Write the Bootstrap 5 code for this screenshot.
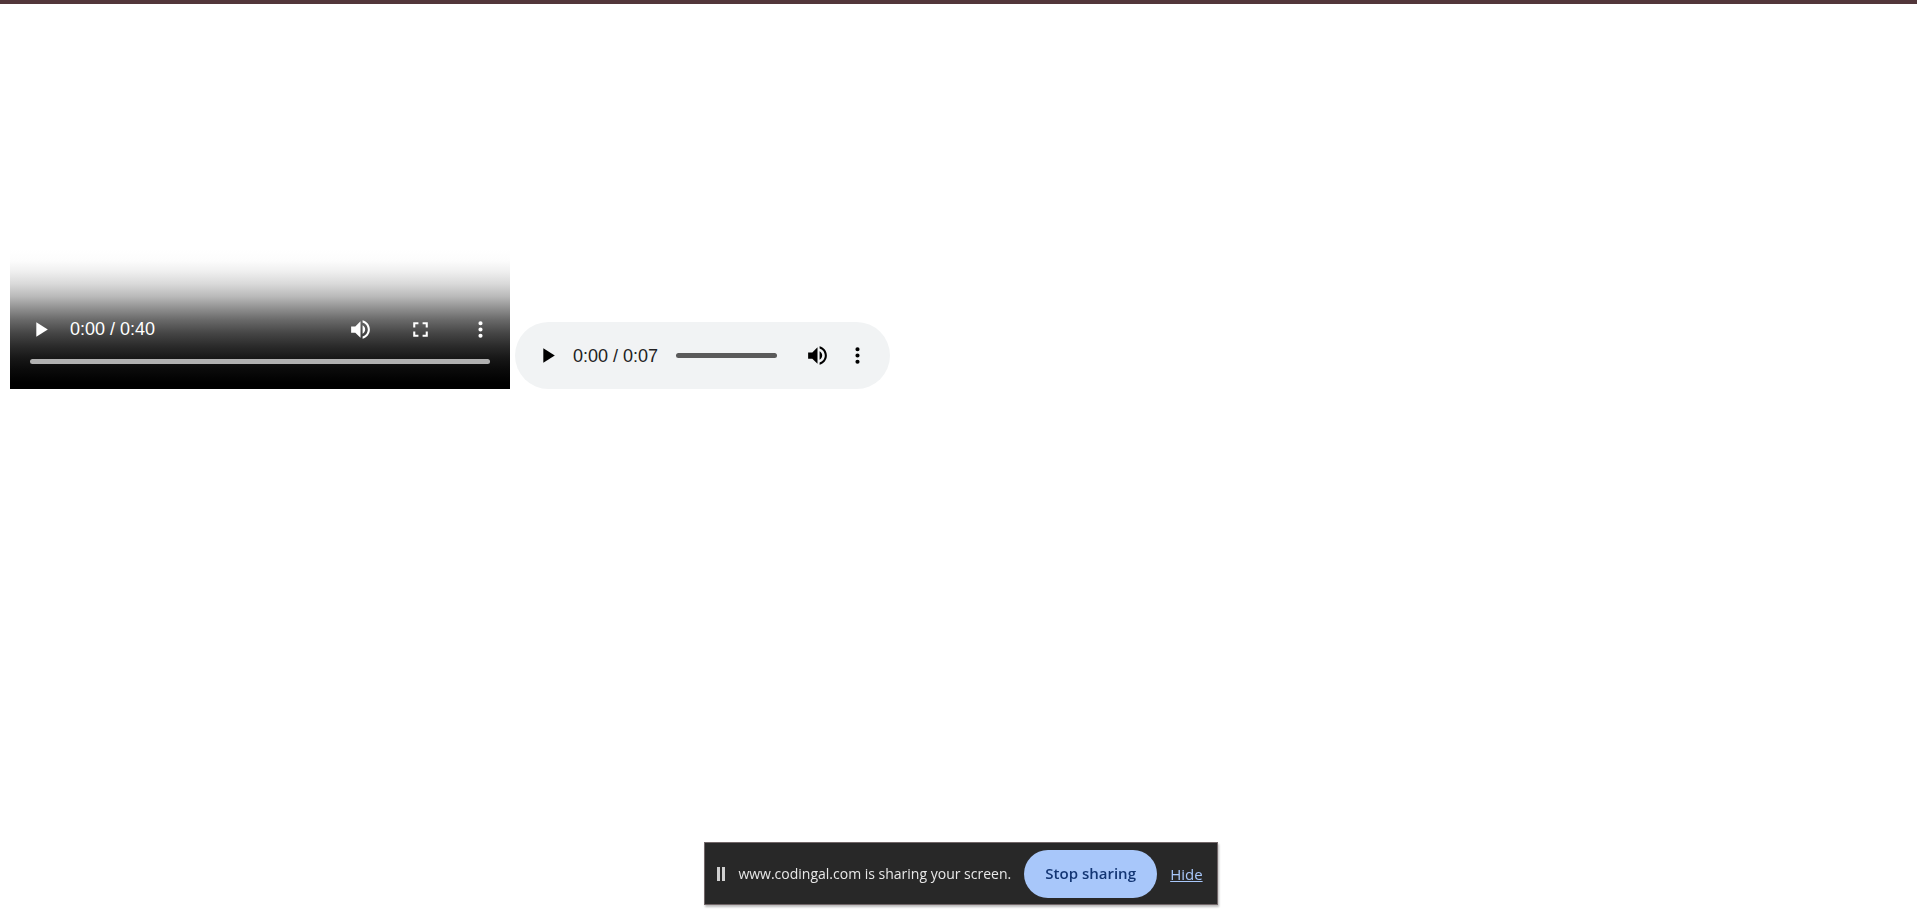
<!DOCTYPE html>
<html lang="en">
<head>
<meta charset="utf-8">
<meta name="viewport" content="width=device-width, initial-scale=1">
<title>Media players</title>
<link href="https://cdn.jsdelivr.net/npm/bootstrap@5.3.0/dist/css/bootstrap.min.css" rel="stylesheet">
<style>
  body { background: #fff; border-top: 4px solid #52363a; font-family: "Liberation Sans", Arial, sans-serif; }
  .stage { padding: 10px; gap: 5px; }
  .icon-btn { border: 0; border-radius: 0; padding: 0; color: inherit; background: none; display: flex; align-items: center; justify-content: center; flex: none; }
  .icon-btn svg { width: 25px; height: 25px; fill: currentColor; }
  .time { font-size: 18px; line-height: 24px; white-space: nowrap; }

  .video-player { width: 500px; max-width: 100%; aspect-ratio: 4 / 3; color: #fff; }
  .video-panel {
    height: 140px; padding-bottom: 25px;
    background: linear-gradient(#fff 0, #fcfcfc 12px, #f0f0f0 22px, #d9d9d9 35px, #b8b8b8 48px, #8e8e8e 60px, #696969 71px, #464646 84px, #2b2b2b 97px, #171717 109px, #0b0b0b 120px, #000 134px);
  }
  .video-panel .icon-btn { width: 60px; height: 60px; }

  .track { appearance: none; -webkit-appearance: none; display: block; height: 5px; margin: 0; border-radius: 3px; min-width: 0; }
  .track::-webkit-slider-thumb { -webkit-appearance: none; width: 0; height: 0; }
  .track-light { background: #b1b1b1; margin: 0 20px; }
  .track-dark { background: #5a5a5a; margin: 0 20px 0 18px; }

  .audio-player { width: 375px; max-width: 100%; height: 67px; padding: 0 13px 0 12px; border-radius: 34px; background: #f1f3f4; color: #000; }
  .audio-player .icon-btn { width: 40px; height: 40px; }
  .audio-player .time { color: #222; margin-left: 6px; }

  .share-wrap { padding: 0 0 7px 5px; pointer-events: none; }
  .share-bar { pointer-events: auto; height: 63px; padding: 0 14px 0 12px; gap: 13px; border: 1px solid #716668; background: #282828; color: #e8e8e8; font: 14px/20px "Open Sans", "Noto Sans", sans-serif; box-shadow: 1px 2px 2px #0004; white-space: nowrap; }
  .pause-mark { width: 8px; height: 14px; border: solid #d0d0d0; border-width: 0 3px; }
  .stop-btn { width: 133px; height: 48px; padding: 0; border: 0; background: #a8c7fa; color: #133674; font-size: 15px; font-weight: 600; }
  .stop-btn:hover { background: #bcd4fb; color: #133674; }
  .hide-link { color: #a8c7fa; font-size: 15px; }
</style>
</head>
<body>
<main class="stage d-flex flex-wrap align-items-end">
  <section class="video-player d-flex flex-column justify-content-end" aria-label="Video player">
    <div class="video-panel d-flex flex-column justify-content-end">
      <div class="d-flex align-items-center">
        <button type="button" class="icon-btn" aria-label="Play"><svg viewBox="0 0 24 24"><path d="M8 5v14l11-7z"/></svg></button>
        <span class="time me-auto">0:00 / 0:40</span>
        <button type="button" class="icon-btn" aria-label="Mute"><svg viewBox="0 0 24 24"><path d="M3 9v6h4l5 5V4L7 9H3zm13.500 3c0-1.770-1.020-3.290-2.500-4.030v8.050c1.480-.730 2.500-2.250 2.500-4.020zM14 3.230v2.060c2.890.860 5 3.540 5 6.710s-2.110 5.850-5 6.710v2.060c4.010-.910 7-4.490 7-8.770s-2.990-7.860-7-8.770z"/></svg></button>
        <button type="button" class="icon-btn" aria-label="Full screen"><svg viewBox="0 0 24 24"><path d="M7 14H5v5h5v-2H7v-3zm-2-4h2V7h3V5H5v5zm12 7h-3v2h5v-5h-2v3zM14 5v2h3v3h2V5h-5z"/></svg></button>
        <button type="button" class="icon-btn" aria-label="More options"><svg viewBox="0 0 24 24"><path d="M12 8a2 2 0 1 0 0-4 2 2 0 0 0 0 4zm0 2a2 2 0 1 0 0 4 2 2 0 0 0 0-4zm0 6a2 2 0 1 0 0 4 2 2 0 0 0 0-4z"/></svg></button>
      </div>
      <input type="range" class="track track-light" min="0" max="40" value="0" aria-label="Video position">
    </div>
  </section>

  <section class="audio-player d-flex align-items-center" aria-label="Audio player">
    <button type="button" class="icon-btn" aria-label="Play"><svg viewBox="0 0 24 24"><path d="M8 5v14l11-7z"/></svg></button>
    <span class="time">0:00 / 0:07</span>
    <input type="range" class="track track-dark flex-fill" min="0" max="7" value="0" aria-label="Audio position">
    <button type="button" class="icon-btn" aria-label="Mute"><svg viewBox="0 0 24 24"><path d="M3 9v6h4l5 5V4L7 9H3zm13.500 3c0-1.770-1.020-3.290-2.500-4.030v8.050c1.480-.730 2.500-2.250 2.500-4.020zM14 3.230v2.060c2.890.860 5 3.540 5 6.710s-2.110 5.850-5 6.710v2.060c4.010-.910 7-4.490 7-8.770s-2.990-7.860-7-8.770z"/></svg></button>
    <button type="button" class="icon-btn" aria-label="More options"><svg viewBox="0 0 24 24"><path d="M12 8a2 2 0 1 0 0-4 2 2 0 0 0 0 4zm0 2a2 2 0 1 0 0 4 2 2 0 0 0 0-4zm0 6a2 2 0 1 0 0 4 2 2 0 0 0 0-4z"/></svg></button>
  </section>
</main>

<aside class="share-wrap fixed-bottom d-flex justify-content-center">
  <div class="share-bar d-flex align-items-center">
    <span class="pause-mark"></span>
    <span>www.codingal.com is sharing your screen.</span>
    <button type="button" class="btn stop-btn rounded-pill">Stop sharing</button>
    <a href="#" class="hide-link">Hide</a>
  </div>
</aside>
<script src="https://cdn.jsdelivr.net/npm/bootstrap@5.3.0/dist/js/bootstrap.bundle.min.js"></script>
</body>
</html>
